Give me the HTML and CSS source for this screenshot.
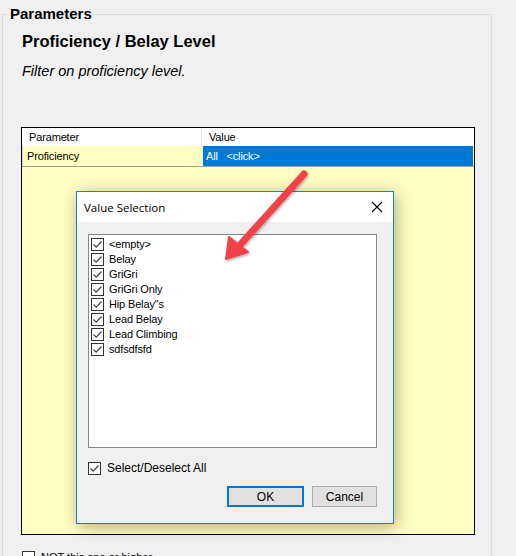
FILE: index.html
```html
<!DOCTYPE html>
<html>
<head>
<meta charset="utf-8">
<link rel="stylesheet" href="styles.css">
</head>
<body>
<div class="group">
  <div class="group-label">Parameters</div>
  <div class="title">Proficiency / Belay Level</div>
  <div class="subtitle">Filter on proficiency level.</div>
  <div class="grid">
    <div class="grid-head">
      <div class="col1">Parameter</div>
      <div class="col2">Value</div>
    </div>
    <div class="grid-row">
      <div class="col1">Proficiency</div>
      <div class="col2 selected">All&nbsp;&nbsp;&nbsp;&lt;click&gt;</div>
    </div>
    <div class="grid-fill"></div>
  </div>
  <div class="not-row">
    <span class="cb-empty"></span>
    <span>NOT this one or higher</span>
  </div>
</div>

<div class="dialog">
  <div class="dlg-title">
    <span>Value Selection</span>
    <svg class="close" width="12" height="12" viewBox="0 0 12 12"><path d="M1 1 L11 11 M11 1 L1 11" stroke="#000" stroke-width="1.1" fill="none"/></svg>
  </div>
  <div class="dlg-body">
    <div class="listbox">
      <div class="item"><span class="cb"><svg width="11" height="11" viewBox="0 0 11 11"><path d="M1.5 5.5 L4.2 8.2 L9.5 2.5" stroke="#444" stroke-width="1.2" fill="none"/></svg></span>&lt;empty&gt;</div>
      <div class="item"><span class="cb"><svg width="11" height="11" viewBox="0 0 11 11"><path d="M1.5 5.5 L4.2 8.2 L9.5 2.5" stroke="#444" stroke-width="1.2" fill="none"/></svg></span>Belay</div>
      <div class="item"><span class="cb"><svg width="11" height="11" viewBox="0 0 11 11"><path d="M1.5 5.5 L4.2 8.2 L9.5 2.5" stroke="#444" stroke-width="1.2" fill="none"/></svg></span>GriGri</div>
      <div class="item"><span class="cb"><svg width="11" height="11" viewBox="0 0 11 11"><path d="M1.5 5.5 L4.2 8.2 L9.5 2.5" stroke="#444" stroke-width="1.2" fill="none"/></svg></span>GriGri Only</div>
      <div class="item"><span class="cb"><svg width="11" height="11" viewBox="0 0 11 11"><path d="M1.5 5.5 L4.2 8.2 L9.5 2.5" stroke="#444" stroke-width="1.2" fill="none"/></svg></span>Hip Belay"s</div>
      <div class="item"><span class="cb"><svg width="11" height="11" viewBox="0 0 11 11"><path d="M1.5 5.5 L4.2 8.2 L9.5 2.5" stroke="#444" stroke-width="1.2" fill="none"/></svg></span>Lead Belay</div>
      <div class="item"><span class="cb"><svg width="11" height="11" viewBox="0 0 11 11"><path d="M1.5 5.5 L4.2 8.2 L9.5 2.5" stroke="#444" stroke-width="1.2" fill="none"/></svg></span>Lead Climbing</div>
      <div class="item"><span class="cb"><svg width="11" height="11" viewBox="0 0 11 11"><path d="M1.5 5.5 L4.2 8.2 L9.5 2.5" stroke="#444" stroke-width="1.2" fill="none"/></svg></span>sdfsdfsfd</div>
    </div>
    <div class="select-all"><span class="cb"><svg width="11" height="11" viewBox="0 0 11 11"><path d="M1.5 5.5 L4.2 8.2 L9.5 2.5" stroke="#444" stroke-width="1.2" fill="none"/></svg></span>Select/Deselect All</div>
    <div class="buttons">
      <div class="btn ok">OK</div>
      <div class="btn cancel">Cancel</div>
    </div>
  </div>
</div>

<svg class="arrow" width="516" height="556" viewBox="0 0 516 556">
  <defs>
    <filter id="sh" x="-20%" y="-20%" width="140%" height="140%">
      <feDropShadow dx="1" dy="1.5" stdDeviation="1.2" flood-color="#000" flood-opacity="0.3"/>
    </filter>
  </defs>
  <g filter="url(#sh)">
    <line x1="304" y1="174" x2="240" y2="245" stroke="#f1434a" stroke-width="7" stroke-linecap="round"/>
    <path d="M226 259 L229 237 L248 252 Z" fill="#f1434a" stroke="#f1434a" stroke-width="2" stroke-linejoin="round"/>
  </g>
</svg>
</body>
</html>
```
FILE: styles.css
```css
html, body {
  margin: 0;
  padding: 0;
  background: #f0f0f0;
  font-family: "Liberation Sans", Arial, sans-serif;
  color: #000;
  overflow: hidden;
  height: 556px;
}

.group {
  margin: 14px 0 0 2px;
  width: 490px;
  height: 560px;
  box-sizing: border-box;
  border: 1px solid #dcdcdc;
  border-bottom: none;
}

.group-label {
  width: fit-content;
  margin: -9px 0 0 6px;
  padding: 0 1px;
  background: #f0f0f0;
  font-size: 15px;
  font-weight: bold;
  line-height: 16px;
}

.title {
  margin: 10px 0 0 19px;
  font-size: 16.5px;
  font-weight: bold;
  line-height: 19px;
}

.subtitle {
  margin: 12px 0 0 19px;
  font-size: 14.5px;
  font-style: italic;
  line-height: 17px;
}

.grid {
  margin: 47px 0 0 18px;
  width: 454px;
  height: 408px;
  box-sizing: border-box;
  border: 1px solid #000;
  background: #ffffc4;
  display: flex;
  flex-direction: column;
  font-size: 11px;
  letter-spacing: -0.15px;
}

.grid-head {
  display: flex;
  height: 18px;
  background: #fff;
  line-height: 18px;
}

.grid-head .col1 {
  width: 180px;
  box-sizing: border-box;
  padding-left: 7px;
  border-right: 1px solid #e5e5e5;
}

.grid-head .col2 {
  flex: 1;
  padding-left: 7px;
}

.grid-row {
  display: flex;
  height: 21px;
  line-height: 20px;
  border-bottom: 1px solid #a0a0a0;
  box-sizing: border-box;
}

.grid-row .col1 {
  width: 181px;
  padding-left: 4px;
  border-left: 1px solid #d6d6d6;
  box-sizing: border-box;
}

.grid-row .col2 {
  flex: 1;
  padding-left: 3px;
}

.grid-row .selected {
  background: #0078d7;
  color: #fff;
  margin-right: 1px;
}

.grid-fill {
  flex: 1;
}

.not-row {
  display: flex;
  align-items: flex-start;
  gap: 6px;
  margin: 16px 0 0 19px;
  font-size: 11px;
}

.cb-empty {
  width: 11px;
  height: 11px;
  border: 1px solid #333;
  background: #fff;
  display: inline-block;
}

.dialog {
  position: absolute;
  left: 76px;
  top: 191px;
  width: 318px;
  height: 333px;
  box-sizing: border-box;
  border: 1px solid #1c7fd6;
  background: #f0f0f0;
  box-shadow: 2px 3px 16px rgba(0, 0, 0, 0.32);
  display: flex;
  flex-direction: column;
}

.dlg-title {
  height: 30px;
  background: #fff;
  display: flex;
  align-items: center;
  justify-content: space-between;
  padding: 0 10px 0 7px;
  font-family: "Open Sans", "Liberation Sans", sans-serif;
  flex-shrink: 0;
}

.dlg-title span {
  font-size: 11.5px;
  margin-top: 1px;
}

.dlg-body {
  flex: 1;
  padding: 12px 16px 0 11px;
  display: flex;
  flex-direction: column;
}

.listbox {
  height: 214px;
  box-sizing: border-box;
  border: 1px solid #828790;
  background: #fff;
  padding: 2px 0 0 2px;
  font-size: 11px;
  letter-spacing: -0.15px;
}

.item {
  display: flex;
  align-items: center;
  height: 15px;
  line-height: 15px;
  gap: 5px;
}

.cb {
  width: 11px;
  height: 11px;
  border: 1px solid #333;
  background: #fff;
  display: inline-flex;
  flex-shrink: 0;
}

.cb svg {
  display: block;
}

.select-all {
  display: flex;
  align-items: center;
  gap: 6px;
  margin-top: 13px;
  font-size: 12px;
  height: 14px;
}

.buttons {
  display: flex;
  justify-content: flex-end;
  gap: 8px;
  margin-top: 11px;
}

.btn {
  height: 21px;
  box-sizing: border-box;
  background: #e1e1e1;
  display: flex;
  align-items: center;
  justify-content: center;
  font-size: 12px;
}

.btn.ok {
  width: 77px;
  border: 2px solid #0078d7;
}

.btn.cancel {
  width: 65px;
  border: 1px solid #adadad;
}

.arrow {
  position: absolute;
  left: 0;
  top: 0;
  pointer-events: none;
}
```
